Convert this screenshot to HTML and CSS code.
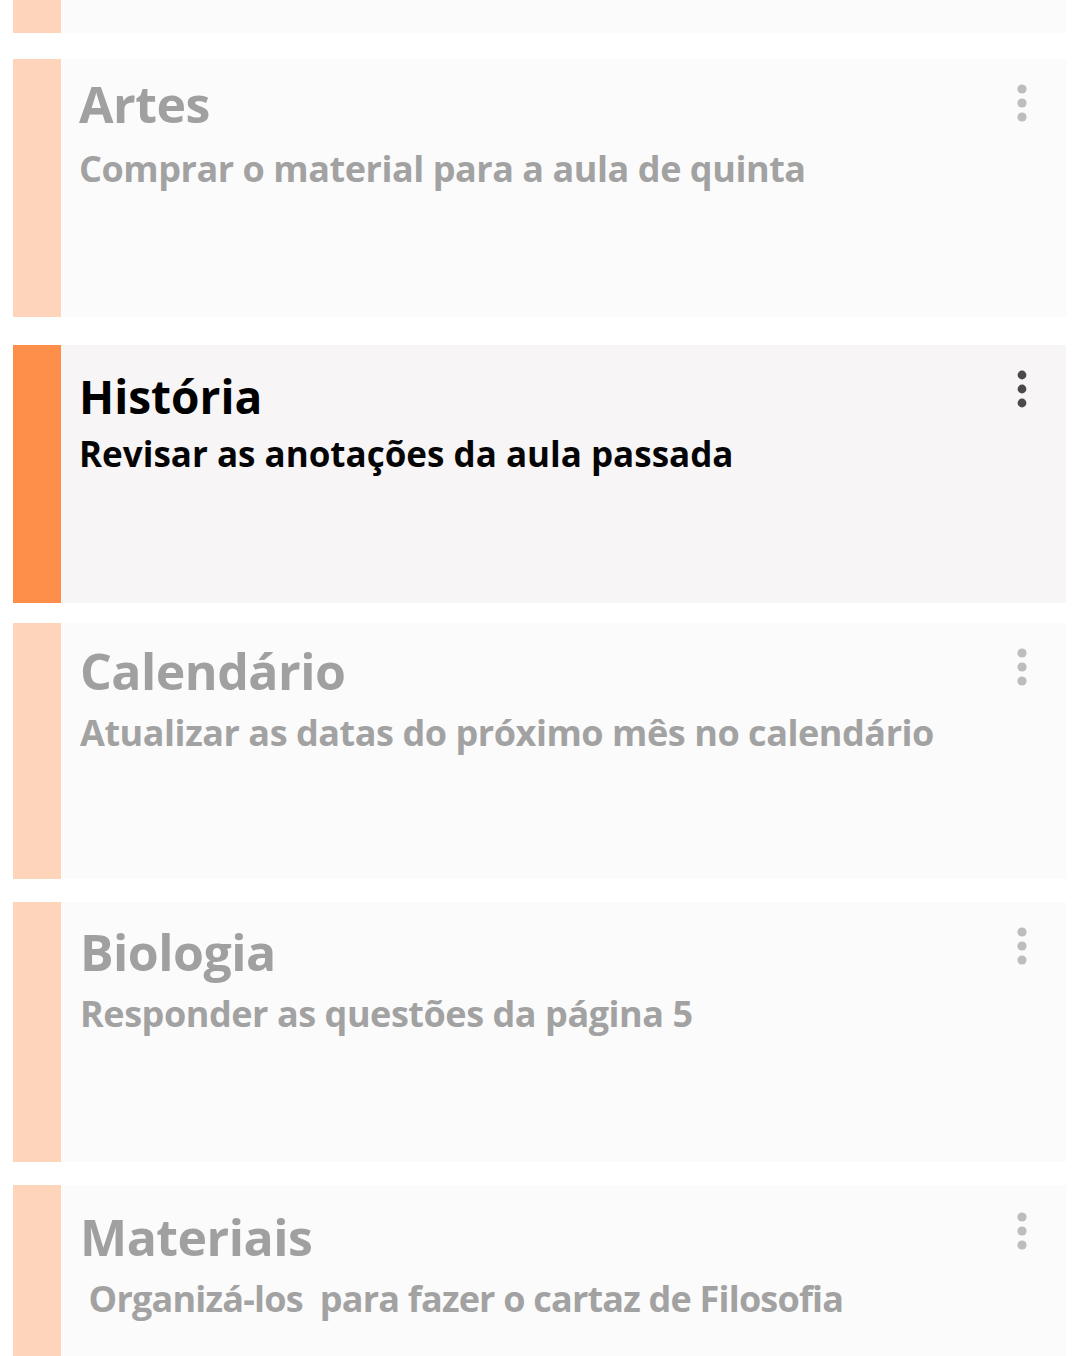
FILE: index.html
```html
<!DOCTYPE html>
<html lang="pt-BR">
<head>
<meta charset="utf-8">
<title>Tarefas</title>
<link rel="stylesheet" href="styles.css">
</head>
<body>
<main class="list">
  <section class="card card-stub">
    <div class="bar"></div>
    <div class="body"></div>
  </section>

  <section class="card card-1">
    <div class="bar"></div>
    <div class="body">
      <h2 class="title">Artes</h2>
      <p class="desc">Comprar o material para a aula de quinta</p>
    </div>
    <div class="menu"><svg width="10" height="38" viewBox="0 0 10 38"><circle cx="5" cy="5" r="4.6"/><circle cx="5" cy="19" r="4.6"/><circle cx="5" cy="33" r="4.6"/></svg></div>
  </section>

  <section class="card card-2 active">
    <div class="bar"></div>
    <div class="body">
      <h2 class="title">História</h2>
      <p class="desc">Revisar as anotações da aula passada</p>
    </div>
    <div class="menu"><svg width="10" height="38" viewBox="0 0 10 38"><circle cx="5" cy="5" r="4.4"/><circle cx="5" cy="19" r="4.4"/><circle cx="5" cy="33" r="4.4"/></svg></div>
  </section>

  <section class="card card-3">
    <div class="bar"></div>
    <div class="body">
      <h2 class="title">Calendário</h2>
      <p class="desc">Atualizar as datas do próximo mês no calendário</p>
    </div>
    <div class="menu"><svg width="10" height="38" viewBox="0 0 10 38"><circle cx="5" cy="5" r="4.6"/><circle cx="5" cy="19" r="4.6"/><circle cx="5" cy="33" r="4.6"/></svg></div>
  </section>

  <section class="card card-4">
    <div class="bar"></div>
    <div class="body">
      <h2 class="title">Biologia</h2>
      <p class="desc">Responder as questões da página 5</p>
    </div>
    <div class="menu"><svg width="10" height="38" viewBox="0 0 10 38"><circle cx="5" cy="5" r="4.6"/><circle cx="5" cy="19" r="4.6"/><circle cx="5" cy="33" r="4.6"/></svg></div>
  </section>

  <section class="card card-5">
    <div class="bar"></div>
    <div class="body">
      <h2 class="title">Materiais</h2>
      <p class="desc">&nbsp;Organizá-los&nbsp; para fazer o cartaz de Filosofia</p>
    </div>
    <div class="menu"><svg width="10" height="38" viewBox="0 0 10 38"><circle cx="5" cy="5" r="4.6"/><circle cx="5" cy="19" r="4.6"/><circle cx="5" cy="33" r="4.6"/></svg></div>
  </section>
</main>
</body>
</html>
```

FILE: styles.css
```css
html, body {
  margin: 0;
  padding: 0;
  background: #ffffff;
}

body {
  font-family: "Open Sans", "Noto Sans", "DejaVu Sans", sans-serif;
  width: 1080px;
  height: 1356px;
  overflow: hidden;
}

.list {
  display: flex;
  flex-direction: column;
  padding: 0 14px 0 13px;
}

.card {
  display: flex;
  background: #fbfbfb;
  flex-shrink: 0;
}

.card-stub { height: 33px; margin-bottom: 26px; }
.card-1 { height: 258px; margin-bottom: 28px; }
.card-2 { height: 258px; margin-bottom: 20px; }
.card-3 { height: 256px; margin-bottom: 23px; }
.card-4 { height: 260px; margin-bottom: 23px; }
.card-5 { height: 200px; }

.bar {
  width: 48px;
  flex-shrink: 0;
  background: #fed5bb;
}

.body {
  flex: 1;
  padding: 15px 0 0 18px;
  min-width: 0;
}

.card-3 .body,
.card-4 .body,
.card-5 .body {
  padding-left: 19px;
}

.title {
  margin: 0;
  font-size: 50px;
  line-height: 60px;
  font-weight: 700;
  color: #a0a0a0;
  letter-spacing: -0.5px;
}

.desc {
  margin: 13px 0 0;
  font-size: 36px;
  line-height: 43px;
  font-weight: 700;
  color: #a2a2a2;
  letter-spacing: -0.45px;
  white-space: nowrap;
}

.card-3 .body { padding-top: 18px; }
.card-4 .body { padding-top: 20px; }
.card-5 .body { padding-top: 22px; }
.card-3 .desc { margin-top: 10px; }
.card-4 .desc { margin-top: 10px; }
.card-5 .desc { margin-top: 10px; letter-spacing: -0.8px; }

.menu {
  width: 88px;
  flex-shrink: 0;
  display: flex;
  justify-content: center;
  padding-top: 25px;
}

.menu svg {
  fill: #bdbdbd;
  display: block;
}

.card-5 .menu { padding-top: 27px; padding-left: 4px; }
.card-3 .menu { padding-left: 4px; }

.active {
  background: #f7f5f5;
}

.active .bar {
  background: #fe8f4a;
}

.active .body {
  padding-top: 23px;
}

.active .title {
  font-size: 46px;
  line-height: 56px;
  color: #000000;
  letter-spacing: 0;
}

.active .desc {
  margin-top: 9px;
  font-size: 35px;
  line-height: 42px;
  color: #050505;
  letter-spacing: 0;
}

.active .menu svg {
  fill: #4a4a4a;
}
```
